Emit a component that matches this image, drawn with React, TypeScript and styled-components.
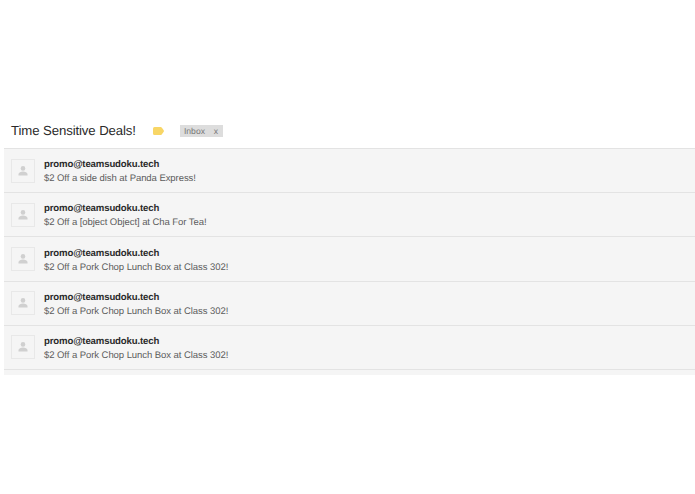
import React from "react";
import styled, { createGlobalStyle } from "styled-components";

const GlobalStyle = createGlobalStyle`
  html, body {
    margin: 0;
    padding: 0;
    background: #fff;
    font-family: "Liberation Sans", Arial, sans-serif;
    text-rendering: geometricPrecision;
  }
`;

const Page = styled.div`
  padding: 115px 0 0 4px;
`;

const Header = styled.div`
  display: flex;
  align-items: center;
  height: 29px;
  padding: 2px 0 0 7px;
  box-sizing: border-box;
`;

const Subject = styled.h2`
  margin: 0;
  font-size: 13.2px;
  font-weight: 400;
  letter-spacing: -0.1px;
  color: #2a2a2a;
  white-space: nowrap;
`;

const LabelIcon = styled.svg`
  width: 11px;
  height: 8px;
  margin-left: 17px;
  flex: none;
`;

const Tag = styled.span`
  display: flex;
  justify-content: space-between;
  width: 43px;
  height: 12px;
  line-height: 12px;
  margin-left: 16px;
  padding: 0 5px 0 4px;
  box-sizing: border-box;
  background: #ddd;
  color: #777;
  font-size: 8.6px;
`;

const List = styled.div`
  margin-top: 4px;
  border-top: 1px solid #e3e3e3;
  padding-bottom: 5px;
  background: #f5f5f5;
`;

const Row = styled.div`
  display: flex;
  align-items: center;
  height: 43.2px;
  padding-left: 7px;
  background: #f5f5f5;
  border-bottom: 1px solid #e3e3e3;
`;

const Avatar = styled.div`
  display: flex;
  align-items: center;
  justify-content: center;
  width: 24px;
  height: 24px;
  box-sizing: border-box;
  border: 1px solid #e8e8e8;
  background: #f5f5f5;
  flex: none;
`;

const Body = styled.div`
  margin: 2px 0 -2px 9px;
`;

const Sender = styled.div`
  font-size: 9.6px;
  line-height: 14px;
  font-weight: 700;
  letter-spacing: -0.14px;
  color: #2a2a2a;
`;

const Snippet = styled.div`
  font-size: 9.5px;
  line-height: 14.6px;
  letter-spacing: -0.06px;
  color: #5c5c5c;
`;

const messages = [
  "$2 Off a side dish at Panda Express!",
  "$2 Off a [object Object] at Cha For Tea!",
  "$2 Off a Pork Chop Lunch Box at Class 302!",
  "$2 Off a Pork Chop Lunch Box at Class 302!",
  "$2 Off a Pork Chop Lunch Box at Class 302!",
];

const PersonIcon = () => (
  <svg width="12" height="12" viewBox="0 0 12 12" aria-hidden="true">
    <circle cx="6" cy="3.4" r="2.3" fill="#d0d0d0" />
    <path d="M1.5 10.5V9c0-1.5 2.6-2.4 4.5-2.4s4.5.9 4.5 2.4v1.5z" fill="#d0d0d0" />
  </svg>
);

export default function App() {
  return (
    <Page>
      <GlobalStyle />
      <Header>
        <Subject>Time Sensitive Deals!</Subject>
        <LabelIcon viewBox="0 0 11 8" aria-hidden="true">
          <path d="M1.5 0H7.6Q8.2 0 8.7 .6L10.7 3.2Q11.2 4 10.7 4.8L8.7 7.4Q8.2 8 7.6 8H1.5Q0 8 0 6.5V1.5Q0 0 1.5 0z" fill="#f8d666" />
        </LabelIcon>
        <Tag>
          <span>Inbox</span>
          <span>x</span>
        </Tag>
      </Header>
      <List>
        {messages.map((text, i) => (
          <Row key={i}>
            <Avatar>
              <PersonIcon />
            </Avatar>
            <Body>
              <Sender>promo@teamsudoku.tech</Sender>
              <Snippet>{text}</Snippet>
            </Body>
          </Row>
        ))}
      </List>
    </Page>
  );
}
